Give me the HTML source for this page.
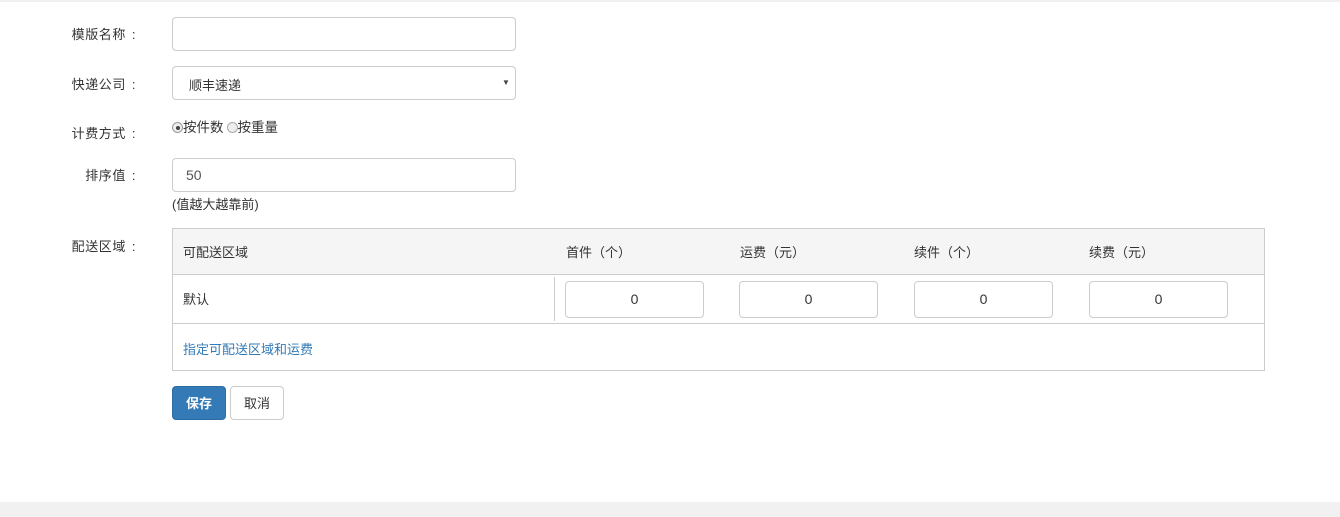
<!DOCTYPE html>
<html><head><meta charset="utf-8"><style>
*{box-sizing:border-box;margin:0;padding:0}
body{width:1340px;height:517px;background:#fff;position:relative;font-family:"Liberation Sans","Noto Sans CJK SC",sans-serif;font-size:13px;color:#333;overflow:hidden}
.a{position:absolute;white-space:nowrap}
.lbl{position:absolute;left:30px;width:112px;text-align:right;letter-spacing:0.6px}
.c{display:inline-block;width:16px;text-align:center}
.inp{position:absolute;border:1px solid #ccc;border-radius:4px;background:#fff}
.num{text-align:center;line-height:35px;font-size:14px}
</style></head><body>
<div class="a" style="left:0;top:0;width:1340px;height:2px;background:#f0f0f0"></div>
<div class="a" style="left:0;top:502px;width:1340px;height:15px;background:#f1f1f1"></div>

<div class="lbl" style="top:24px">模版名称<span class="c">:</span></div>
<div class="inp" style="left:172px;top:17px;width:344px;height:34px"></div>

<div class="lbl" style="top:74px">快递公司<span class="c">:</span></div>
<div class="inp" style="left:172px;top:66px;width:344px;height:34px"><span class="a" style="left:16px;top:8px">顺丰速递</span><span class="a" style="left:329px;top:11px;font-size:8px;color:#444">▼</span></div>

<div class="lbl" style="top:123px">计费方式<span class="c">:</span></div>
<div class="a" style="left:172px;top:116px;font-size:13.5px"><span style="display:inline-block;width:11px;height:11px;border:1px solid #999;border-radius:50%;background:#eee;position:relative;top:1px"><span style="position:absolute;left:2.5px;top:2.5px;width:4px;height:4px;border-radius:50%;background:#444"></span></span>按件数<span style="display:inline-block;width:11px;height:11px;border:1px solid #aaa;border-radius:50%;background:#eee;position:relative;top:1px;margin-left:3px"></span>按重量</div>

<div class="lbl" style="top:165px">排序值<span class="c">:</span></div>
<div class="inp" style="left:172px;top:158px;width:344px;height:34px"><span class="a" style="left:13px;top:8px;font-size:14px;color:#555">50</span></div>
<div class="a" style="left:172px;top:194px">(值越大越靠前)</div>

<div class="lbl" style="top:236px">配送区域<span class="c">:</span></div>
<div class="a" style="left:172px;top:228px;width:1093px;height:143px;border:1px solid #ccc">
 <div class="a" style="left:0;top:0;width:1091px;height:46px;background:#f5f5f5;border-bottom:1px solid #ccc"></div>
 <div class="a" style="left:10px;top:13px">可配送区域</div>
 <div class="a" style="left:393px;top:13px">首件（个）</div>
 <div class="a" style="left:567px;top:13px">运费（元）</div>
 <div class="a" style="left:741px;top:13px">续件（个）</div>
 <div class="a" style="left:916px;top:13px">续费（元）</div>
 <div class="a" style="left:10px;top:60px">默认</div>
 <div class="a" style="left:381px;top:48px;width:1px;height:44px;background:#ccc"></div>
 <div class="a" style="left:0;top:94px;width:1091px;height:1px;background:#ccc"></div>
 <div class="inp num" style="left:392px;top:52px;width:139px;height:37px">0</div>
 <div class="inp num" style="left:566px;top:52px;width:139px;height:37px">0</div>
 <div class="inp num" style="left:741px;top:52px;width:139px;height:37px">0</div>
 <div class="inp num" style="left:916px;top:52px;width:139px;height:37px">0</div>
 <div class="a" style="left:10px;top:110px;color:#337ab7">指定可配送区域和运费</div>
</div>

<div class="a" style="left:172px;top:386px;width:54px;height:34px;background:#337ab7;border:1px solid #2e6da4;border-radius:4px;color:#fff;text-align:center;line-height:33px;font-weight:bold">保存</div>
<div class="a" style="left:230px;top:386px;width:54px;height:34px;background:#fff;border:1px solid #ccc;border-radius:4px;text-align:center;line-height:33px">取消</div>
</body></html>
